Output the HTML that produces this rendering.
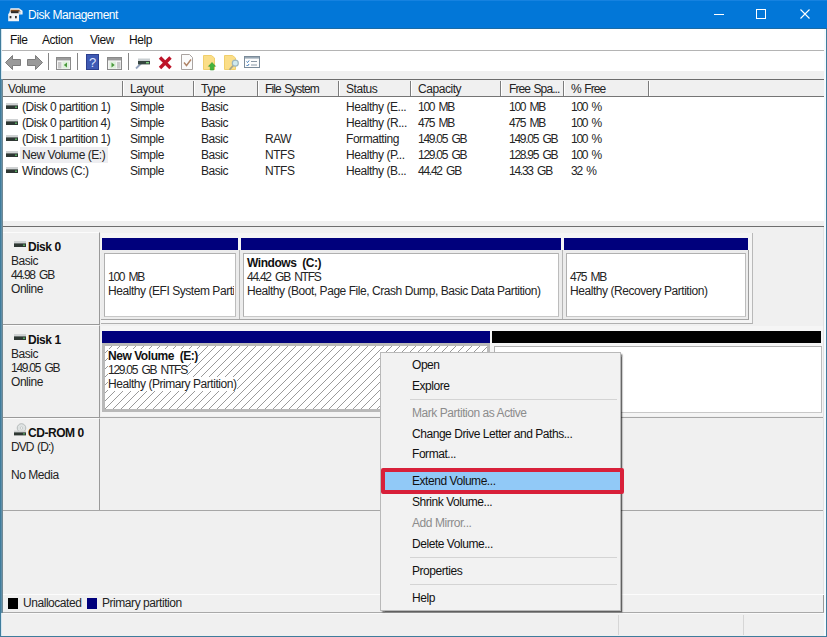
<!DOCTYPE html>
<html>
<head>
<meta charset="utf-8">
<title>Disk Management</title>
<style>
*{box-sizing:border-box;margin:0;padding:0}
html,body{width:827px;height:637px;overflow:hidden;background:#f0f0f0}
body{position:relative;font-family:"Liberation Sans",sans-serif;font-size:12px;letter-spacing:-0.45px;color:#242424;line-height:14px}
.abs{position:absolute}
.t{position:absolute;white-space:nowrap;height:14px;line-height:14px}
.b{font-weight:bold;color:#111}
.n{letter-spacing:-1.25px;word-spacing:2.2px}
.m{letter-spacing:-0.9px;word-spacing:1px}
.hl{position:absolute;height:1px}
.vl{position:absolute;width:1px}
/* window frame */
#frameL{left:0;top:29px;width:1px;height:608px;background:#3f7c9c}
#frameL2{left:2px;top:79px;width:1px;height:534px;background:#708893}
#frameL3{left:1px;top:29px;width:1px;height:607px;background:#d4e6f0}
#frameL4{left:1px;top:79px;width:1px;height:534px;background:#5e8ea9}
#frameR{left:826px;top:29px;width:1px;height:608px;background:#3f7c9c}
#frameR2{left:824px;top:29px;width:2px;height:607px;background:#f4fbff}
#frameB{left:0;top:636px;width:827px;height:1px;background:#3f7c9c}
#title{left:0;top:0;width:827px;height:29px;background:#0277d8;box-shadow:inset 0 1px 0 #1682e0, inset 0 -1px 0 #1a6ba6}
#title .t{color:#fff;left:28px;top:8px;font-size:12px}
#menubar{left:1px;top:29px;width:825px;height:21px;background:#fff}
#menubar .t{top:4px;color:#111}
#toolbar{left:1px;top:50px;width:825px;height:21px;background:#fff;border-top:1px solid #b4b4b4}
.tsep{position:absolute;top:53px;width:1px;height:17px;background:#858585}
/* list */
#list{left:3px;top:79px;width:821px;height:142px;background:#fff;border-top:1px solid #6c6c6c}
#lhead{left:3px;top:80px;width:821px;height:17px;background:#f0f0f0;border-bottom:1px solid #757575}
.cd{position:absolute;top:81px;width:2px;box-sizing:border-box;height:15px;background:#7c7c7c;border-right:1px solid #fff;left:0}
.h{top:82px}
.r1{top:100px}.r2{top:116px}.r3{top:132px}.r4{top:148px}.r5{top:164px}
.c0{left:22px}.c1{left:130px}.c2{left:201px}.c3{left:265px}.c4{left:346px}.c5{left:418px}.c6{left:509px}.c7{left:571px}
.vico{position:absolute;left:6px;width:12px;height:6px}
/* lower pane */
#lowtop{left:3px;top:226px;width:821px;background:#6e6e6e}
.lab{position:absolute;left:3px;width:97px;height:93px;border-top:1px solid #fbfbfb;border-right:1px solid #9a9a9a;border-bottom:1px solid #9a9a9a;background:#f0f0f0}
.rowline{position:absolute;left:100px;width:723px;height:1px;background:#a6a6a6}
.nav{position:absolute;height:12px;background:#00007c}
.blk{position:absolute;height:12px;background:#000}
.pf{position:absolute;background:#e3e3e3}
.pb{position:absolute;background:#fff;border:1px solid #b0b0b0;border-bottom-color:#c8c8c8;border-right-color:#bcbcbc}
/* menu */
#menu{left:380px;top:352px;width:241px;height:259px;background:#f2f2f2;border:1px solid #b9b9b9;box-shadow:1.5px 1.5px 1.5px 0 rgba(0,0,0,.6)}
#menu .t{left:31px;color:#111}
#menu .dis{color:#8c8c8c}
.msep{position:absolute;left:29px;width:207px;height:1px;background:#d4d4d4}
</style>
</head>
<body>
<!-- title bar -->
<div id="title" class="abs">
  <svg class="abs" style="left:7px;top:7px" width="17" height="16" viewBox="0 0 17 15" preserveAspectRatio="none">
    <path d="M3.5 1.2h8.5l3.6 2.3v3.6H12v6.3H1.2V6.6l1-1z" fill="#f2f4f6"/>
    <rect x="3.6" y="2.6" width="9" height="2.4" fill="#7a4a22"/>
    <rect x="4" y="4" width="9.6" height="1.8" fill="#2a2a2a"/>
    <rect x="11.5" y="4.2" width="3" height="1.3" fill="#e8eef4"/>
    <rect x="2.6" y="8.4" width="1.8" height="2.2" fill="#333"/>
    <rect x="8" y="8.4" width="1.8" height="2.2" fill="#333"/>
  </svg>
  <div class="t">Disk Management</div>
  <div class="abs" style="left:714px;top:14px;width:10px;height:1px;background:#fff"></div>
  <div class="abs" style="left:756px;top:9px;width:10px;height:10px;border:1px solid #fff"></div>
  <svg class="abs" style="left:800px;top:9px" width="10" height="10" viewBox="0 0 10 10"><path d="M0.500 0.500L9.500 9.500M9.500 0.500L0.500 9.500" stroke="#fff" stroke-width="1.100" fill="none"/></svg>
</div>
<!-- menu bar -->
<div id="menubar" class="abs">
  <div class="t" style="left:9px">File</div>
  <div class="t" style="left:41px">Action</div>
  <div class="t" style="left:89px">View</div>
  <div class="t" style="left:128px">Help</div>
</div>
<!-- toolbar -->
<div id="toolbar" class="abs"></div>
<svg class="abs" style="left:0;top:51px" width="280" height="21" viewBox="0 0 280 21">
  <!-- back / forward -->
  <path d="M5.5 11.5L12.5 4.5V8.5H20.5V14.5H12.5V18.5Z" fill="#9a9a9a" stroke="#7d7d7d" stroke-width="1"/>
  <path d="M42.5 11.5L35.5 4.5V8.5H27.5V14.5H35.5V18.5Z" fill="#9a9a9a" stroke="#7d7d7d" stroke-width="1"/>
  <!-- console tree -->
  <rect x="56.5" y="6.5" width="14" height="12" fill="#f4f4f4" stroke="#8a8a8a"/>
  <rect x="57" y="7" width="13" height="2.4" fill="#9b9b9b"/>
  <rect x="58" y="11" width="3.4" height="6.5" fill="#c9c9c9"/>
  <rect x="62.5" y="10.5" width="6.5" height="7" fill="#dff0dc"/>
  <path d="M67 11.5V16.5L63.8 14Z" fill="#4a9a3c"/>
  <!-- help -->
  <rect x="86.5" y="3.5" width="12" height="15" fill="#3f5ab4" stroke="#2c3f8f"/>
  <text x="92.5" y="16" font-family="Liberation Sans" font-size="13" fill="#dde4ff" text-anchor="middle" letter-spacing="0">?</text>
  <!-- action pane -->
  <rect x="107.5" y="6.5" width="14" height="12" fill="#f4f4f4" stroke="#8a8a8a"/>
  <rect x="108" y="7" width="13" height="2.4" fill="#9b9b9b"/>
  <rect x="117" y="11" width="3.4" height="6.5" fill="#c9c9c9"/>
  <rect x="109.5" y="10.5" width="6.5" height="7" fill="#dff0dc"/>
  <path d="M111.5 11.5V16.5L114.7 14Z" fill="#4a9a3c"/>
  <!-- connect -->
  <path d="M136 17.500L141.500 12" stroke="#94a3bd" stroke-width="1.8"/>
  <rect x="138" y="7.500" width="12" height="3" fill="#c9cfd2"/>
  <rect x="138" y="10" width="12" height="3.400" fill="#364540"/>
  <rect x="146" y="11" width="3" height="1.400" fill="#7fd17f"/>
  <!-- red X -->
  <path d="M160 6.500L170.500 17M170.500 6.500L160 17" stroke="#bd1429" stroke-width="3.400" stroke-linecap="butt"/>
  <!-- properties doc -->
  <path d="M181.5 3.5H189.5L192.5 6.5V18.5H181.5Z" fill="#fbfbfb" stroke="#a9a3a0"/>
  <path d="M184 11.5L186.5 14.5L191 8.5" fill="none" stroke="#b08466" stroke-width="1.400"/>
  <!-- folder up -->
  <path d="M203.500 4.500H211.500L214.500 7V18.500H203.500Z" fill="#fbde88" stroke="#f0cf6c"/>
  <path d="M212 11.500L215.500 15.300H213.700V19H210.300V15.300H208.500Z" fill="#43b43c" stroke="#2f942d" stroke-width=".6"/>
  <!-- folder search -->
  <path d="M224.500 4.500H232.500L235.500 7V18.500H224.500Z" fill="#fbde88" stroke="#f0cf6c"/>
  <circle cx="235.300" cy="12.200" r="3" fill="#cfe9ee" stroke="#9db5bd" stroke-width="1.200"/>
  <path d="M233 14.800L229.500 18.800" stroke="#a5a58a" stroke-width="1.700"/>
  <!-- checklist -->
  <rect x="244.500" y="5.500" width="15" height="11" fill="#fdfdfd" stroke="#7b8b99"/>
  <rect x="245" y="6" width="14" height="1.6" fill="#9aa9b6"/>
  <path d="M246.5 10.5l1 1 1.6-2M246.500 14l1 1 1.600-2" stroke="#3a78b8" stroke-width="1" fill="none"/>
  <path d="M251 10.500h6M251 14h6" stroke="#8a98a5" stroke-width="1"/>
</svg>
<div class="tsep" style="left:48px"></div>
<div class="tsep" style="left:77px"></div>
<div class="tsep" style="left:128px"></div>

<!-- volume list -->
<div id="list" class="abs"></div>
<div id="lhead" class="abs"></div>
<div class="cd" style="left:122px"></div>
<div class="cd" style="left:193px"></div>
<div class="cd" style="left:257px"></div>
<div class="cd" style="left:338px"></div>
<div class="cd" style="left:410px"></div>
<div class="cd" style="left:500px"></div>
<div class="cd" style="left:563px"></div>
<div class="cd" style="left:648px"></div>
<div class="t h" style="left:8px">Volume</div>
<div class="t h c1">Layout</div>
<div class="t h c2">Type</div>
<div class="t h c3 m">File System</div>
<div class="t h c4">Status</div>
<div class="t h c5">Capacity</div>
<div class="t h c6 m">Free Spa...</div>
<div class="t h c7 m">% Free</div>

<div class="abs" style="left:20px;top:147px;width:88px;height:16px;background:#eeeef1"></div>

<svg class="vico" style="top:103px" viewBox="0 0 12 6"><rect width="12" height="3" fill="#cfd2d3"/><rect y="2.400" width="12" height="3.600" fill="#2e3733"/><rect x="9" y="3.600" width="2" height="1.200" fill="#5fc46a"/></svg>
<svg class="vico" style="top:119px" viewBox="0 0 12 6"><rect width="12" height="3" fill="#cfd2d3"/><rect y="2.400" width="12" height="3.600" fill="#2e3733"/><rect x="9" y="3.600" width="2" height="1.200" fill="#5fc46a"/></svg>
<svg class="vico" style="top:135px" viewBox="0 0 12 6"><rect width="12" height="3" fill="#cfd2d3"/><rect y="2.400" width="12" height="3.600" fill="#2e3733"/><rect x="9" y="3.600" width="2" height="1.200" fill="#5fc46a"/></svg>
<svg class="vico" style="top:151px" viewBox="0 0 12 6"><rect width="12" height="3" fill="#cfd2d3"/><rect y="2.400" width="12" height="3.600" fill="#2e3733"/><rect x="9" y="3.600" width="2" height="1.200" fill="#5fc46a"/></svg>
<svg class="vico" style="top:167px" viewBox="0 0 12 6"><rect width="12" height="3" fill="#cfd2d3"/><rect y="2.400" width="12" height="3.600" fill="#2e3733"/><rect x="9" y="3.600" width="2" height="1.200" fill="#5fc46a"/></svg>

<div class="t r1 c0">(Disk 0 partition 1)</div><div class="t r1 c1">Simple</div><div class="t r1 c2">Basic</div><div class="t r1 c4">Healthy (E...</div><div class="t r1 c5 n">100 MB</div><div class="t r1 c6 n">100 MB</div><div class="t r1 c7 n">100 %</div>
<div class="t r2 c0">(Disk 0 partition 4)</div><div class="t r2 c1">Simple</div><div class="t r2 c2">Basic</div><div class="t r2 c4">Healthy (R...</div><div class="t r2 c5 n">475 MB</div><div class="t r2 c6 n">475 MB</div><div class="t r2 c7 n">100 %</div>
<div class="t r3 c0">(Disk 1 partition 1)</div><div class="t r3 c1">Simple</div><div class="t r3 c2">Basic</div><div class="t r3 c3">RAW</div><div class="t r3 c4">Formatting</div><div class="t r3 c5 n">149.05 GB</div><div class="t r3 c6 n">149.05 GB</div><div class="t r3 c7 n">100 %</div>
<div class="t r4 c0">New Volume (E:)</div><div class="t r4 c1">Simple</div><div class="t r4 c2">Basic</div><div class="t r4 c3">NTFS</div><div class="t r4 c4">Healthy (P...</div><div class="t r4 c5 n">129.05 GB</div><div class="t r4 c6 n">128.95 GB</div><div class="t r4 c7 n">100 %</div>
<div class="t r5 c0">Windows (C:)</div><div class="t r5 c1">Simple</div><div class="t r5 c2">Basic</div><div class="t r5 c3">NTFS</div><div class="t r5 c4">Healthy (B...</div><div class="t r5 c5 n">44.42 GB</div><div class="t r5 c6 n">14.33 GB</div><div class="t r5 c7 n">32 %</div>

<!-- lower graphical pane -->
<div id="lowtop" class="hl"></div>
<div class="vl" style="left:823px;top:227px;height:367px;background:#e2e2e2"></div>
<div class="vl" style="left:823px;top:594px;height:19px;background:#9a9a9a"></div>

<div class="lab" style="top:232px"></div>
<div class="lab" style="top:325px"></div>
<div class="lab" style="top:418px"></div>
<div class="rowline" style="top:417px"></div>
<div class="hl" style="left:3px;top:510px;width:820px;background:#a6a6a6"></div>

<!-- disk 0 label -->
<svg class="abs" style="left:14px;top:241px" width="12" height="6" viewBox="0 0 12 6"><rect width="12" height="3" fill="#cfd2d3"/><rect y="2.400" width="12" height="3.600" fill="#2e3733"/><rect x="9" y="3.600" width="2" height="1.200" fill="#5fc46a"/></svg>
<div class="t b" style="left:28px;top:240px">Disk 0</div>
<div class="t" style="left:11px;top:254px">Basic</div>
<div class="t n" style="left:11px;top:268px">44.98 GB</div>
<div class="t" style="left:11px;top:282px">Online</div>
<!-- disk 1 label -->
<svg class="abs" style="left:14px;top:334px" width="12" height="6" viewBox="0 0 12 6"><rect width="12" height="3" fill="#cfd2d3"/><rect y="2.400" width="12" height="3.600" fill="#2e3733"/><rect x="9" y="3.600" width="2" height="1.200" fill="#5fc46a"/></svg>
<div class="t b" style="left:28px;top:333px">Disk 1</div>
<div class="t" style="left:11px;top:347px">Basic</div>
<div class="t n" style="left:11px;top:361px">149.05 GB</div>
<div class="t" style="left:11px;top:375px">Online</div>
<!-- cd-rom label -->
<svg class="abs" style="left:13px;top:423px" width="14" height="13" viewBox="0 0 14 13"><circle cx="8.500" cy="5" r="4.300" fill="#dfe3e3" stroke="#a9b0b0" stroke-width=".8"/><circle cx="8.500" cy="5" r="1.200" fill="#f7f7f7" stroke="#a9b0b0" stroke-width=".5"/><rect x="1" y="7.600" width="12" height="2.400" fill="#cfd2d3"/><rect x="1" y="9.400" width="12" height="3" fill="#2e3733"/><rect x="10" y="10.400" width="2" height="1" fill="#5fc46a"/></svg>
<div class="t b" style="left:28px;top:426px">CD-ROM 0</div>
<div class="t m" style="left:11px;top:440px">DVD (D:)</div>
<div class="t" style="left:11px;top:468px">No Media</div>

<!-- disk 0 partitions -->
<div class="pf" style="left:101px;top:233px;width:652px;height:91px;background:#f5f5f5;border-right:1px solid #b9b9b9;border-bottom:1px solid #b0b0b0"></div>
<div class="pf" style="left:101px;top:250px;width:648px;height:70px;background:#ececec;border-right:1px solid #9e9e9e;border-bottom:1px solid #a6a6a6"></div>
<div class="nav" style="left:102px;top:238px;width:136px"></div>
<div class="nav" style="left:241px;top:238px;width:320px"></div>
<div class="nav" style="left:564px;top:238px;width:184px"></div>
<div class="pb" style="left:104px;top:253px;width:132px;height:64px"></div>
<div class="pb" style="left:243px;top:253px;width:316px;height:64px"></div>
<div class="pb" style="left:566px;top:253px;width:180px;height:64px"></div>
<div class="vl" style="left:239px;top:250px;height:69px;background:#b5b5b5"></div>
<div class="vl" style="left:562px;top:250px;height:69px;background:#b5b5b5"></div>
<div class="t n" style="left:108px;top:270px">100 MB</div>
<div class="t" style="left:108px;top:284px;width:126px;overflow:hidden">Healthy (EFI System Partition)</div>
<div class="t b" style="left:247px;top:256px">Windows&nbsp; (C:)</div>
<div class="t n" style="left:247px;top:270px">44.42 GB NTFS</div>
<div class="t" style="left:247px;top:284px">Healthy (Boot, Page File, Crash Dump, Basic Data Partition)</div>
<div class="t n" style="left:570px;top:270px">475 MB</div>
<div class="t" style="left:570px;top:284px">Healthy (Recovery Partition)</div>

<!-- disk 1 partitions -->
<div class="pf" style="left:101px;top:326px;width:722px;height:90px;background:#f5f5f5"></div>
<div class="nav" style="left:102px;top:331px;width:388px"></div>
<div class="blk" style="left:492px;top:331px;width:329px"></div>
<div class="abs" style="left:102px;top:343px;width:388px;height:69px;background:#b9b9b9"></div>
<svg class="abs" style="left:105px;top:346px" width="382" height="63" shape-rendering="crispEdges"><defs><pattern id="hp" width="8" height="8" patternUnits="userSpaceOnUse" x="7" y="0"><g fill="#9a9a9a"><rect x="7" y="0" width="1" height="1"/><rect x="6" y="1" width="1" height="1"/><rect x="5" y="2" width="1" height="1"/><rect x="4" y="3" width="1" height="1"/><rect x="3" y="4" width="1" height="1"/><rect x="2" y="5" width="1" height="1"/><rect x="1" y="6" width="1" height="1"/><rect x="0" y="7" width="1" height="1"/></g></pattern></defs><rect width="382" height="63" fill="#fff"/><rect width="382" height="63" fill="url(#hp)"/></svg>
<div class="pb" style="left:494px;top:346px;width:328px;height:67px"></div>
<div class="t b" style="left:108px;top:349px;background:#fff">New Volume&nbsp; (E:)</div>
<div class="t n" style="left:108px;top:363px;background:#fff">129.05 GB NTFS</div>
<div class="t" style="left:108px;top:377px;background:#fff">Healthy (Primary Partition)</div>

<!-- legend -->
<div class="hl" style="left:3px;top:594px;width:821px;background:#fcfcfc"></div>
<div class="abs" style="left:8px;top:598px;width:10px;height:11px;background:#000"></div>
<div class="t" style="left:23px;top:596px">Unallocated</div>
<div class="abs" style="left:87px;top:598px;width:10px;height:11px;background:#00007c"></div>
<div class="t" style="left:102px;top:596px">Primary partition</div>
<div class="hl" style="left:3px;top:612px;width:821px;background:#a9a9a9"></div>
<div class="hl" style="left:3px;top:613px;width:821px;background:#fafafa"></div>
<!-- status bar -->
<div class="vl" style="left:618px;top:615px;height:20px;background:#d6d6d6"></div>
<div class="vl" style="left:743px;top:615px;height:20px;background:#d6d6d6"></div>

<!-- context menu -->
<div id="menu" class="abs">
  <div class="t" style="top:5px">Open</div>
  <div class="t" style="top:26px">Explore</div>
  <div class="msep" style="top:46px"></div>
  <div class="t dis" style="top:53px">Mark Partition as Active</div>
  <div class="t" style="top:74px">Change Drive Letter and Paths...</div>
  <div class="t" style="top:94px">Format...</div>
  <div class="t" style="top:142px">Shrink Volume...</div>
  <div class="t dis" style="top:163px">Add Mirror...</div>
  <div class="t" style="top:184px">Delete Volume...</div>
  <div class="msep" style="top:204px"></div>
  <div class="t" style="top:211px">Properties</div>
  <div class="msep" style="top:231px"></div>
  <div class="t" style="top:238px">Help</div>
</div>
<div class="abs" style="left:381px;top:468px;width:243px;height:26px;background:#91c9f7;border:4px solid #d8203a;border-radius:2px"></div>
<div class="t" style="left:412px;top:474px;color:#111">Extend Volume...</div>

<div id="frameL" class="abs"></div>
<div id="frameL3" class="abs"></div>
<div id="frameL2" class="abs"></div>
<div id="frameL4" class="abs"></div>
<div id="frameR2" class="abs"></div>
<div id="frameR" class="abs"></div>
<div id="frameB" class="abs"></div>
</body>
</html>
